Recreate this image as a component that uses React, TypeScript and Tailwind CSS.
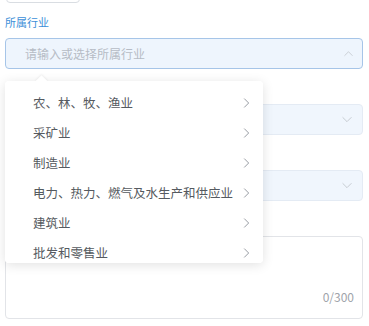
import React from "react"

const industries = [
  "农、林、牧、渔业",
  "采矿业",
  "制造业",
  "电力、热力、燃气及水生产和供应业",
  "建筑业",
  "批发和零售业",
]

function Chevron({ dir, className }: { dir: "up" | "down" | "right"; className?: string }) {
  const pts =
    dir === "up" ? "1,6 6,1 11,6" : dir === "down" ? "1,1 6,6 11,1" : "1,1 6,6 1,11"
  const size = dir === "right" ? { w: 8, h: 12 } : { w: 12, h: 8 }
  return (
    <svg
      width={size.w}
      height={size.h}
      viewBox={dir === "right" ? "0 0 8 12" : "0 0 12 8"}
      className={className}
      fill="none"
      stroke="currentColor"
      strokeWidth="1.1"
      strokeLinecap="round"
      strokeLinejoin="round"
    >
      <polyline points={pts} />
    </svg>
  )
}

function Label({ children }: { children?: React.ReactNode }) {
  return (
    <div className="mt-[11px] mb-[8px] h-[16px] text-[11px] leading-[16px] text-[#3d8fd8]">
      {children}
    </div>
  )
}

export default function App() {
  return (
    <div
      className="relative w-[369px] h-[326px] overflow-hidden bg-white pl-[5px] pr-[6px] pt-px"
      style={{ fontFamily: '"Noto Sans CJK SC", "Noto Sans", sans-serif' }}
    >
      {/* partially visible field above */}
      <div className="mt-[-28px] h-[30px] w-[74px] ml-px rounded-[4px] border border-[#d9dde2] bg-white" />

      <Label>所属行业</Label>
      <div className="flex h-[31px] items-center justify-between rounded-[4px] border border-[#a6c5e8] bg-[#eef5fd] pl-[19px] pr-[9px]">
        <span className="text-[12px] text-[#b6bcc5]">请输入或选择所属行业</span>
        <Chevron dir="up" className="w-[9px] text-[#c3c8cf]" />
      </div>

      {/* labels of the fields below are covered by the popover */}
      <Label />
      <div className="flex h-[31px] items-center justify-end rounded-[4px] border border-[#e4ebf4] bg-[#f0f6fd] pr-[10px]">
        <Chevron dir="down" className="w-[10px] text-[#c3c8cf]" />
      </div>

      <Label />
      <div className="flex h-[31px] items-center justify-end rounded-[4px] border border-[#e4ebf4] bg-[#f0f6fd] pr-[10px]">
        <Chevron dir="down" className="w-[10px] text-[#c3c8cf]" />
      </div>

      <Label />
      <div className="flex h-[83px] flex-col items-end justify-end rounded-[4px] border border-[#e2e4e8] bg-white pb-[13px] pr-[8px]">
        <span className="text-[12px] leading-[16px] text-[#a0a4aa]">0/300</span>
      </div>

      {/* dropdown popover */}
      <div className="absolute left-[5px] top-[81px] w-[258px] h-[182px] rounded-[4px] bg-white shadow-[0_2px_12px_rgba(0,0,0,0.12)]">
        <div className="absolute left-[32px] top-[-4px] h-[9px] w-[9px] rotate-45 bg-white shadow-[-1px_-1px_2px_rgba(0,0,0,0.05)]" />
        <div className="relative h-full overflow-hidden rounded-[4px] bg-white pt-[7px]">
          {industries.map((name) => (
            <div key={name} className="flex h-[30px] items-center justify-between pl-[28px] pr-[12px]">
              <span className="text-[12.5px] text-[#555a60] whitespace-nowrap">{name}</span>
              <Chevron dir="right" className="h-[10px] text-[#8e939a]" />
            </div>
          ))}
        </div>
      </div>
    </div>
  )
}
